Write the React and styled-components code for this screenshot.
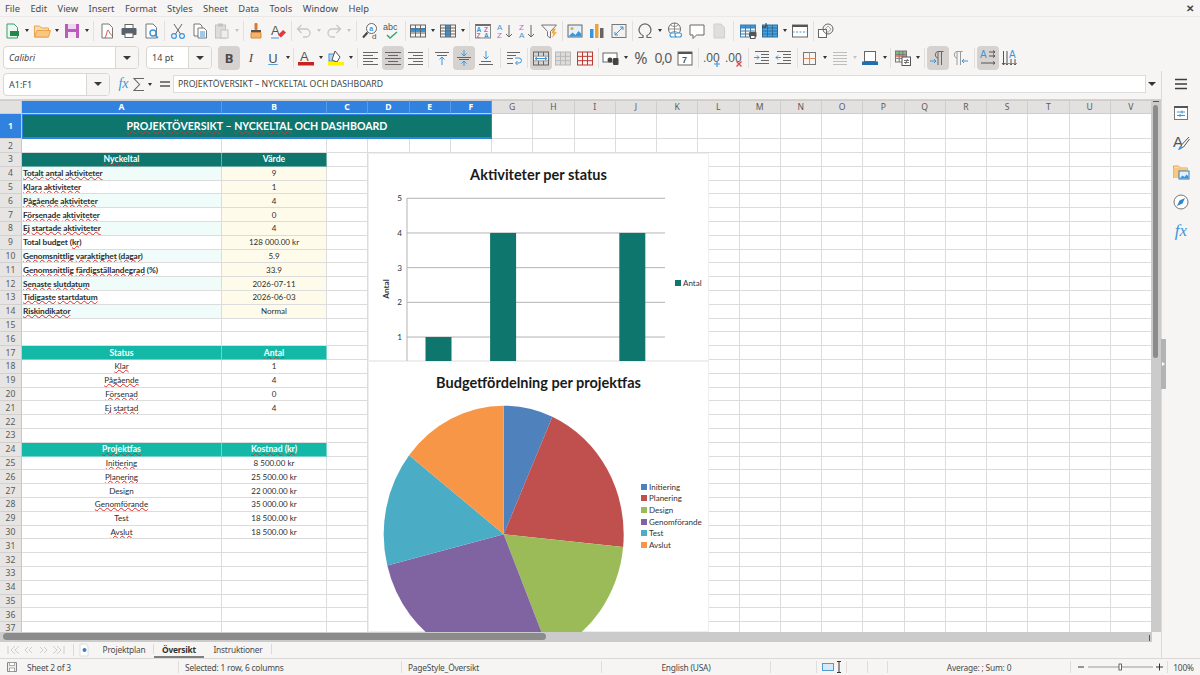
import React from "react";
import styled, { createGlobalStyle } from "styled-components";

// ─── Global ───

const Global = createGlobalStyle`
  html, body { margin: 0; padding: 0; background: #f6f5f4; }
  body { width: 1200px; height: 675px; overflow: hidden; font-family: "Noto Sans", sans-serif; }
  * { box-sizing: border-box; }
  svg { flex: none; }
`;

const UI = `"Noto Sans", "Open Sans", sans-serif`;
const SHEET = `Lato, "Noto Sans", sans-serif`;

// ─── Chrome ───

const Page = styled.div`
  width: 1200px;
  height: 675px;
  display: flex;
  flex-direction: column;
  background: #f6f5f4;
  color: #3d3d3d;
  overflow: hidden;
`;

const MenuBar = styled.div`
  height: 17px;
  display: flex;
  align-items: center;
  justify-content: space-between;
  padding: 0 6px 0 5px;
  font: 9.4px ${UI};
  color: #4a4a4a;
  border-bottom: 1px solid #ebe9e7;
`;

const MenuList = styled.div`
  display: flex;
  gap: 10.4px;
`;

const CloseMark = styled.span`
  font-size: 10px;
  font-weight: 700;
  color: #444;
`;

const Toolbar = styled.div`
  height: 27px;
  display: flex;
  align-items: center;
  padding-left: ${({ $pad }) => $pad}px;
`;

const Btn = styled.div`
  width: 22px;
  height: 24px;
  flex: none;
  display: flex;
  align-items: center;
  justify-content: center;
  border-radius: 4px;
  background: ${({ $on }) => ($on ? "#d5d2cf" : "transparent")};
`;

const Drop = styled.div`
  width: 8px;
  flex: none;
  display: flex;
  justify-content: center;
  &::after {
    content: "";
    border-left: 2.5px solid transparent;
    border-right: 2.5px solid transparent;
    border-top: 3px solid ${({ $off }) => ($off ? "#c4c4c4" : "#333")};
  }
`;

const Sep = styled.div`
  width: ${({ $w }) => $w}px;
  height: 20px;
  flex: none;
  display: flex;
  justify-content: center;
  &::after {
    content: "";
    width: 1px;
    background: #e2e0de;
  }
`;

const Combo = styled.div`
  width: ${({ $w }) => $w}px;
  height: 23px;
  flex: none;
  display: flex;
  align-items: stretch;
  margin-right: ${({ $gap }) => $gap || 0}px;
  background: #fff;
  border: 1px solid #d9d7d4;
  border-radius: 4px;
  overflow: hidden;
`;

const ComboText = styled.div`
  flex: 1;
  display: flex;
  align-items: center;
  padding-left: 5px;
  font: ${({ $italic }) => ($italic ? "italic" : "normal")} 9px ${UI};
  color: #444;
`;

const ComboArrow = styled.div`
  width: 23px;
  flex: none;
  display: flex;
  align-items: center;
  justify-content: center;
  background: #f6f5f4;
  border-left: 1px solid #d9d7d4;
  &::after {
    content: "";
    border-left: 4px solid transparent;
    border-right: 4px solid transparent;
    border-top: 4px solid #3a3a3a;
  }
`;

const Letter = styled.span`
  font: ${({ $bold }) => ($bold ? 700 : 400)} ${({ $italic }) => ($italic ? "italic" : "normal")} ${({ $size }) => $size || 13}px ${({ $italic }) => ($italic ? `"Liberation Serif", serif` : UI)};
  color: ${({ $c }) => $c || "#4a4a4a"};
  letter-spacing: ${({ $track }) => $track || 0}px;
  text-decoration: ${({ $under }) => ($under ? "underline" : "none")};
  text-decoration-color: #5aa0d8;
`;

const Middle = styled.div`
  flex: 1;
  min-height: 0;
  display: flex;
`;

const LeftColumn = styled.div`
  width: 1162px;
  display: flex;
  flex-direction: column;
  border-right: 1px solid #dcdad8;
`;

const FormulaBar = styled.div`
  height: 29px;
  display: flex;
  align-items: center;
  padding-left: 3px;
  border-bottom: 1px solid #d4d2d0;
`;

const NameBox = styled(Combo)`
  margin-top: -2px;
`;

const FormulaIcons = styled.div`
  display: flex;
  align-items: center;
  margin-left: 6px;
  margin-top: -2px;
`;

const FormulaBtn = styled(Btn)`
  width: 15px;
`;

const FormulaDrop = styled(Drop)`
  margin-right: 3px;
`;

const FormulaInput = styled.div`
  width: 973px;
  height: 18px;
  margin: -2px 0 0 1px;
  padding-left: 4px;
  display: flex;
  align-items: center;
  background: #fff;
  border: 1px solid #dedcda;
  font: 8.7px ${UI};
  color: #444;
  white-space: nowrap;
`;

const FormulaArrow = styled(Drop)`
  margin: -2px 0 0 2px;
  &::after {
    border-left-width: 4px;
    border-right-width: 4px;
    border-top-width: 4px;
  }
`;

const Work = styled.div`
  height: 532px;
  display: flex;
`;

// ─── Sheet ───

const Sheet = styled.div`
  position: relative;
  width: 1152px;
  height: 532px;
  overflow: hidden;
  background: #fff;
`;

const Row = styled.div`
  display: grid;
  grid-template-columns: 22px 200px 105px repeat(20, 41.25px);
  height: ${({ $h }) => $h}px;
`;

const ColHead = styled.div`
  display: flex;
  align-items: center;
  justify-content: center;
  font: ${({ $sel }) => ($sel ? 700 : 400)} 8.6px ${UI};
  color: ${({ $sel }) => ($sel ? "#fff" : "#5a5a5a")};
  background: ${({ $sel }) => ($sel ? "#3181de" : "#e2e1df")};
  border-right: 1px solid ${({ $sel }) => ($sel ? "#5a9be6" : "#cfcecc")};
  border-bottom: 1px solid #cfcecc;
  border-top: 1px solid #cfcecc;
`;

const RowHead = styled.div`
  display: flex;
  align-items: center;
  justify-content: center;
  font: ${({ $sel }) => ($sel ? 700 : 400)} 8.6px ${UI};
  color: ${({ $sel }) => ($sel ? "#fff" : "#5a5a5a")};
  background: ${({ $sel }) => ($sel ? "#3181de" : "#e6e5e3")};
  border-right: 1px solid #c8c7c5;
  border-bottom: 1px solid #d2d1cf;
`;

const Cell = styled.div`
  display: flex;
  align-items: center;
  justify-content: ${({ $left }) => ($left ? "flex-start" : "center")};
  padding-left: ${({ $left }) => ($left ? "1px" : 0)};
  min-width: 0;
  overflow: hidden;
  white-space: pre;
  font: ${({ $bold }) => ($bold ? 700 : 400)} ${({ $size }) => $size || 8.1}px ${SHEET};
  letter-spacing: ${({ $left }) => ($left ? "-0.09px" : 0)};
  color: ${({ $fg }) => $fg || "#2c2c2c"};
  background: ${({ $bg }) => $bg || "#fff"};
  border-right: 1px solid ${({ $line }) => $line || "#dcdcdc"};
  border-bottom: 1px solid ${({ $line }) => $line || "#dcdcdc"};
`;

const TitleCell = styled(Cell)`
  grid-column: span 6;
  font-size: 10.6px;
  color: #fff;
  background: #0f766e;
  border: 1px solid #bfe0ec;
  outline: 1px solid #3181de;
  outline-offset: -1px;
  border-bottom: 2px solid #3181de;
`;

const Misspelt = styled.span`
  text-decoration: underline wavy #e02b2b;
  text-decoration-thickness: 1px;
  text-underline-offset: 0;
  text-decoration-skip-ink: none;
`;

const VScroll = styled.div`
  position: relative;
  width: 10px;
  background: #cbcbcb;
  &::before {
    content: "";
    position: absolute;
    left: 2px;
    top: 5px;
    width: 5px;
    height: 253px;
    border-radius: 3px;
    background: #8b8b8b;
  }
  &::after {
    content: "";
    position: absolute;
    left: 2px;
    top: 1px;
    width: 6px;
    height: 1px;
    background: #555;
  }
`;

const HScrollRow = styled.div`
  height: 10px;
  width: 1152px;
  position: relative;
  background: #cbcbcb;
  &::before {
    content: "";
    position: absolute;
    left: 3px;
    top: 1px;
    width: 543px;
    height: 7px;
    border-radius: 4px;
    background: #8b8b8b;
  }
  &::after {
    content: "";
    position: absolute;
    right: 2px;
    top: 3px;
    width: 1px;
    height: 6px;
    background: #555;
  }
`;

// ─── Charts ───

const ChartFrame = styled.div`
  position: absolute;
  left: 368px;
  top: ${({ $top }) => $top}px;
  width: 341px;
  height: ${({ $h }) => $h}px;
  overflow: hidden;
  background: #fff;
  box-shadow: inset 0 0 0 1px #eeeeee;
`;

const ChartTitle = styled.div`
  height: 42px;
  display: flex;
  align-items: center;
  justify-content: center;
  font: 700 14.5px ${SHEET};
  color: #1a1a1a;
`;

const ChartBody = styled.div`
  display: flex;
  align-items: flex-start;
`;

const Plot = styled.svg`
  overflow: visible;
`;

const Legend = styled.div`
  display: flex;
  flex-direction: column;
  margin-left: ${({ $left }) => $left}px;
  margin-top: ${({ $top }) => $top}px;
`;

const LegendItem = styled.div`
  height: 11.65px;
  display: flex;
  align-items: center;
  gap: 2px;
  font: 8px ${SHEET};
  color: #333;
  white-space: nowrap;
`;

const Swatch = styled.i`
  width: 6px;
  height: 6px;
  background: ${({ $c }) => $c};
`;

const ChartText = styled.text`
  font: 8.2px ${SHEET};
  fill: #333;
`;

const AxisTitle = styled(ChartText)`
  font-weight: 700;
`;

// ─── Sidebar ───

const Sidebar = styled.div`
  position: relative;
  width: 38px;
  display: flex;
  flex-direction: column;
  align-items: center;
  gap: 7.4px;
  padding-top: 2px;
`;

const SideBtn = styled.div`
  width: 22px;
  height: 22px;
  display: flex;
  align-items: center;
  justify-content: center;
`;

const SideHandle = styled.div`
  position: absolute;
  left: -1px;
  top: 268px;
  width: 5px;
  height: 50px;
  background: #b3b3b3;
  display: flex;
  align-items: center;
  &::after {
    content: "";
    border-top: 2.5px solid transparent;
    border-bottom: 2.5px solid transparent;
    border-left: 3px solid #fff;
    margin-left: 1px;
  }
`;

// ─── Tabs and status bar ───

const Tabs = styled.div`
  height: 16px;
  display: flex;
  align-items: stretch;
  font: 8.4px ${UI};
  letter-spacing: -0.2px;
  color: #4a4a4a;
`;

const TabNav = styled.div`
  width: 74px;
  padding-left: 6px;
  display: flex;
  align-items: center;
  border-right: 1px solid #dcdad8;
  margin: 2px 0;
`;

const TabAdd = styled.div`
  width: 20px;
  padding-left: 5px;
  display: flex;
  align-items: center;
`;

const Tab = styled.div`
  width: ${({ $w }) => $w}px;
  display: flex;
  align-items: center;
  justify-content: center;
  font-weight: ${({ $on }) => ($on ? 700 : 400)};
  color: ${({ $on }) => ($on ? "#333" : "#4a4a4a")};
  border-bottom: 2px solid ${({ $on }) => ($on ? "#7f7f7f" : "transparent")};
  position: relative;
  &::after {
    content: ${({ $bar }) => ($bar ? '""' : "none")};
    position: absolute;
    right: 0;
    top: 2px;
    bottom: 2px;
    width: 1px;
    background: #dcdad8;
  }
`;

const StatusBar = styled.div`
  height: 17px;
  display: grid;
  grid-template-columns: 179px 223px 200px 169px 46px 30px 21px 20px 183px 97px 1fr;
  font: 8.4px ${UI};
  letter-spacing: -0.2px;
  color: #4a4a4a;
  border-top: 1px solid #dad8d6;
`;

const StatusCell = styled.div`
  display: flex;
  align-items: center;
  justify-content: ${({ $center }) => ($center ? "center" : "flex-start")};
  gap: ${({ $gap }) => $gap || 0}px;
  padding-left: ${({ $pad }) => $pad || 0}px;
  border-right: 1px solid ${({ $last }) => ($last ? "transparent" : "#e0dedc")};
  margin: 2px 0;
  white-space: nowrap;
`;

// ─── Icons ───

const SV = ({ w = 18, h = 18, children }) => (
  <svg width={w} height={h} viewBox={`0 0 ${w} ${h}`} fill="none">
    {children}
  </svg>
);

const Mini = styled.text`
  font: ${({ $w }) => $w || 700} ${({ $s }) => $s || 7}px "Liberation Sans", sans-serif;
  fill: ${({ $c }) => $c || "#555"};
`;

const Doc = ({ fill = "#fff", stroke = "#777" }) => (
  <path d="M4 2h7l3.5 3.5V16H4z" fill={fill} stroke={stroke} />
);

const Grid = ({ x = 1.5, y = 3, w = 15, h = 12, stroke = "#666", rows = 3, cols = 3 }) => (
  <g stroke={stroke} strokeWidth="1">
    <rect x={x} y={y} width={w} height={h} fill="none" />
    {Array.from({ length: rows - 1 }, (_, i) => (
      <path key={i} d={`M${x} ${y + ((i + 1) * h) / rows}h${w}`} />
    ))}
    {Array.from({ length: cols - 1 }, (_, i) => (
      <path key={i} d={`M${x + ((i + 1) * w) / cols} ${y}v${h}`} />
    ))}
  </g>
);

const Lines = ({ rows, stroke = "#666" }) => (
  <g stroke={stroke}>
    {rows.map(([x, y, w], i) => (
      <path key={i} d={`M${x} ${y + 0.5}h${w}`} />
    ))}
  </g>
);

const BLUE = "#3a96dc";

const ICONS = {
  new: <SV><Doc stroke="#35a067" fill="#eef8f2" /><rect x="7" y="9" width="9" height="5" fill="#1e8a4c" /></SV>,
  open: <SV><path d="M1.5 15V4h5l2 2h7v9z" fill="#fbdcae" stroke="#e9a24f" /><path d="M1.5 15L4 8.5h13.5L15.5 15z" fill="#f9c77f" stroke="#e9a24f" /></SV>,
  save: <SV><rect x="2" y="2" width="14" height="14" fill="#bb5cbb" /><rect x="5" y="2" width="8" height="5" fill="#f0d6f0" /><rect x="5" y="10" width="8" height="6" fill="#f6e6f6" /></SV>,
  pdf: <SV><Doc /><path d="M7 16c2-4 2-8 3-8s1 4 5 6" stroke="#e04040" /></SV>,
  print: <SV><rect x="5" y="2.5" width="8" height="4" fill="#fff" stroke="#666" /><rect x="1.5" y="6" width="15" height="7" rx="1" fill="#58616b" /><rect x="5" y="11" width="8" height="4.5" fill="#fff" stroke="#666" /></SV>,
  preview: <SV><Doc /><circle cx="11" cy="11" r="3" fill="#fff" stroke={BLUE} strokeWidth="1.4" /><path d="M13 13l3 3" stroke={BLUE} strokeWidth="1.6" /></SV>,
  cut: <SV><path d="M5 2l6.5 10M13 2L6.5 12" stroke="#666" /><circle cx="5" cy="14" r="2.4" stroke={BLUE} strokeWidth="1.2" /><circle cx="13" cy="14" r="2.4" stroke={BLUE} strokeWidth="1.2" /></SV>,
  copy: <SV><path d="M3 2h6l2 2v10H3z" fill="#fff" stroke="#777" /><path d="M7 6h6l2.5 2.5V16H7z" fill="#fff" stroke="#777" /><path d="M9 10h5M9 12h5M9 14h5" stroke={BLUE} /></SV>,
  paste: <SV><rect x="2.5" y="3" width="10" height="13" fill="#dcdcdc" stroke="#c2c2c2" /><rect x="5" y="1.5" width="5" height="3" fill="#c2c2c2" /><rect x="8" y="8" width="7" height="8" fill="#eee" stroke="#c2c2c2" /></SV>,
  clone: <SV><rect x="7.5" y="1" width="3" height="7" rx="1" fill="#d9772b" /><rect x="4" y="8" width="10" height="2.5" fill="#555" /><path d="M4 10.5h10V16H4z" fill="#f3b36f" stroke="#d98a3e" /></SV>,
  clear: <SV><Mini x="2" y="13" $s="13" $w="400">A</Mini><path d="M9 13l5-5 3 2.5-5 5z" fill="#e2393c" /><path d="M2 16h8" stroke={BLUE} /></SV>,
  undo: <SV><path d="M6.5 3L2.5 7l4 4M2.5 7H11a4 4 0 0 1 0 8H8" stroke="#c6c6c6" strokeWidth="1.3" /></SV>,
  redo: <SV><path d="M11.5 3l4 4-4 4M15.5 7H7a4 4 0 0 0 0 8h3" stroke="#c6c6c6" strokeWidth="1.3" /></SV>,
  find: <SV><circle cx="10.5" cy="6.5" r="5" fill="#fff" stroke="#666" /><path d="M6.5 10.5L2 15.5" stroke="#444" strokeWidth="2" /><Mini x="8.3" y="9" $s="7" $c={BLUE}>a</Mini><Mini x="11" y="17" $s="8" $w="400">d</Mini></SV>,
  spell: <SV><Mini x="0" y="8" $s="9" $w="400">abc</Mini><path d="M4 13l3 3 7-6" stroke="#34a468" strokeWidth="1.4" /></SV>,
  row: <SV><rect x="1.5" y="6" width="15" height="4" fill={BLUE} /><Grid /></SV>,
  column: <SV><rect x="6.5" y="3" width="5" height="12" fill={BLUE} /><Grid rows={4} /></SV>,
  sort: <SV><rect x="1" y="2" width="16" height="2" fill="#555" /><rect x="1.5" y="3" width="15" height="13" stroke="#888" /><Mini x="2.5" y="9.5" $s="6.5" $c={BLUE}>A</Mini><Mini x="2.5" y="15.5" $s="6.5" $c="#c763c7">Z</Mini><Mini x="10" y="9.5" $s="6.5" $c="#c763c7">Z</Mini><Mini x="10" y="15.5" $s="6.5" $c={BLUE}>A</Mini></SV>,
  asc: <SV><Mini x="1" y="8" $s="8" $w="400" $c={BLUE}>A</Mini><Mini x="1" y="16" $s="8" $w="400" $c="#c763c7">Z</Mini><path d="M13 3v12M10 12l3 3 3-3" stroke="#666" /></SV>,
  desc: <SV><Mini x="1" y="8" $s="8" $w="400" $c="#c763c7">Z</Mini><Mini x="1" y="16" $s="8" $w="400" $c={BLUE}>A</Mini><path d="M13 3v12M10 12l3 3 3-3" stroke="#666" /></SV>,
  filter: <SV><path d="M1.5 3h15l-6 6.5V16l-3-2V9.5z" stroke="#777" /><path d="M13 7l3-.5-2 4 3-.5-5 6 1.5-5-2 .5z" fill="#f0a533" /></SV>,
  image: <SV><rect x="2" y="3" width="14" height="12" fill="#e4f1fb" stroke="#666" /><circle cx="6" cy="6.5" r="1.5" fill="#f2a53c" /><path d="M2.5 14.5l4-4 3 2.5 3-4 3 3v2.5z" fill={BLUE} /></SV>,
  chart: <SV><rect x="2" y="7" width="3.5" height="9" fill={BLUE} /><rect x="7" y="2" width="3.5" height="14" fill="#eda33d" /><rect x="12" y="6" width="3.5" height="10" fill="#666" /></SV>,
  pivot: <SV><rect x="2" y="2.5" width="14" height="13" fill="#f1f1f1" stroke="#777" /><path d="M5 13l8-8M10 5h3v3M5 10v3h3" stroke={BLUE} /></SV>,
  omega: <SV><path d="M2.5 15.5H7v-2a6 6 0 1 1 4 0v2h4.5" stroke="#666" strokeWidth="1.2" /></SV>,
  link: <SV><circle cx="8.5" cy="7" r="6" fill="#fff" stroke="#666" /><path d="M2.5 7h12M8.500 1v12M4.500 3c3 2 5 2 8 0M4.500 11c3-2 5-2 8 0" stroke="#777" strokeWidth=".8" /><rect x="4" y="11" width="6.5" height="4" rx="2" fill="#fff" stroke={BLUE} strokeWidth="1.1" /><rect x="9" y="11" width="6.5" height="4" rx="2" fill="#fff" stroke={BLUE} strokeWidth="1.1" /></SV>,
  comment: <SV><path d="M2 3h14v10H8.5L5 16.5V13H2z" fill="#fff" stroke="#666" /></SV>,
  header: <SV><Doc fill="#dedede" stroke="#cfcfcf" /></SV>,
  definePrint: <SV><rect x="1.5" y="3" width="15" height="3" fill={BLUE} /><Grid stroke="#3f7fae" rows={4} /><rect x="10" y="10" width="7.5" height="5" rx="1" fill="#555" /><rect x="11.5" y="13.5" width="4.5" height="3" fill="#fff" stroke="#555" /></SV>,
  freeze: <SV><rect x="1.5" y="3" width="15" height="12" fill="#4aa3de" /><Grid stroke="#2b6f9f" rows={4} /><path d="M5 1v4M1 5h4" stroke="#333" /></SV>,
  split: <SV><rect x="1.5" y="3" width="15" height="12" fill="#fff" stroke="#666" /><rect x="1.5" y="3" width="15" height="2" fill="#555" /><path d="M1.5 10h15" stroke={BLUE} strokeDasharray="2 1.5" /></SV>,
  shapes: <SV><rect x="1.5" y="7.5" width="8" height="8" fill="#fff" stroke="#666" /><circle cx="11" cy="7" r="5" stroke="#666" /><path d="M11 4l3 3-3 3.5L8 7z" stroke="#888" strokeWidth=".7" /></SV>,

  fontColor: <SV><Mini x="3" y="12" $s="13" $w="400">A</Mini><rect x="1" y="13" width="16" height="3.5" fill="#c9211e" /></SV>,
  highlight: <SV><rect x="2" y="5" width="8" height="7" fill="#bcd6ee" stroke={BLUE} /><path d="M8 2l5 6-3 5-5-2z" fill="#fff" stroke="#555" /><rect x="1" y="13" width="16" height="3.5" fill="#fff200" /></SV>,
  alignLeft: <SV><Lines rows={[[1, 3, 15], [1, 6, 10], [1, 9, 15], [1, 12, 10], [1, 15, 15]]} /></SV>,
  alignCenter: <SV><Lines rows={[[1, 3, 16], [4, 6, 10], [1, 9, 16], [4, 12, 10], [1, 15, 16]]} /></SV>,
  alignRight: <SV><Lines rows={[[2, 3, 15], [7, 6, 10], [2, 9, 15], [7, 12, 10], [2, 15, 15]]} /></SV>,
  vTop: <SV><Lines rows={[[2, 3, 14], [4, 6, 10]]} /><path d="M9 16V8M6.5 10.5L9 8l2.5 2.5" stroke={BLUE} /></SV>,
  vMid: <SV><Lines rows={[[2, 8, 14], [4, 10, 10]]} /><path d="M9 1v6M6.5 4.5L9 7l2.5-2.5M9 17v-5M6.5 14.5L9 12l2.5 2.5" stroke={BLUE} /></SV>,
  vBottom: <SV><Lines rows={[[4, 12, 10], [2, 15, 14]]} /><path d="M9 2v8M6.5 7.5L9 10l2.5-2.5" stroke={BLUE} /></SV>,
  wrap: <SV><Lines rows={[[2, 3, 13], [2, 6, 9], [2, 9, 6], [2, 14, 6]]} /><path d="M10 9h4a2.5 2.5 0 0 1 0 5h-3M12.5 12l-2 2 2 2" stroke={BLUE} /></SV>,
  merge: <SV><Grid y={3} h={13} stroke="#666" rows={3} cols={3} /><rect x="2" y="7.5" width="14" height="4" fill="#fff" /><path d="M3 9.5h12M5 8L3 9.5 5 11M13 8l2 1.5-2 1.500" stroke={BLUE} /></SV>,
  unmerge: <SV><rect x="1.5" y="3" width="15" height="13" fill="#ddd" /><Grid y={3} h={13} stroke="#b8b8b8" /></SV>,
  splitCell: <SV><Grid y={3} h={13} stroke="#c0392f" /></SV>,
  currency: <SV><rect x="1" y="4" width="14" height="9" fill="#fff" stroke="#666" /><circle cx="8" cy="11" r="2.5" fill="#444" /><rect x="11" y="9" width="5.5" height="7" rx="1" fill="#444" /></SV>,
  percent: <Letter $size={16} $c="#5c5c5c">%</Letter>,
  number: <Letter $size={14} $c="#5c5c5c" $track={-1}>0,0</Letter>,
  date: <SV><rect x="2" y="3" width="14" height="13" fill="#fff" stroke="#666" /><rect x="2" y="3" width="14" height="2" fill="#555" /><Mini x="6" y="14" $s="9">7</Mini></SV>,
  addDec: <SV><Mini x="0" y="13" $s="12" $w="400">.00</Mini><path d="M14 12v6M11 15h6" stroke={BLUE} strokeWidth="1.2" /></SV>,
  remDec: <SV><Mini x="0" y="13" $s="12" $w="400">.00</Mini><path d="M11.5 12.5l5 5M16.5 12.5l-5 5" stroke="#e0403c" strokeWidth="1.2" /></SV>,
  indent: <SV><Lines rows={[[2, 2, 14], [8, 5, 8], [8, 8, 8], [8, 11, 8], [2, 14, 14]]} /><path d="M1 8.5h5M4 6.5l2 2-2 2" stroke={BLUE} /></SV>,
  outdent: <SV><Lines rows={[[2, 2, 14], [8, 5, 8], [8, 8, 8], [8, 11, 8], [2, 14, 14]]} /><path d="M6 8.5H1M3 6.500l-2 2 2 2" stroke={BLUE} /></SV>,
  borders: <SV><rect x="2.5" y="3.5" width="12" height="12" stroke="#777" /><path d="M8.5 3.5v12M2.5 9.5h12" stroke="#e08b5a" /></SV>,
  borderStyle: <SV><Lines stroke="#bdbdbd" rows={[[2, 3, 14], [2, 6, 14], [2, 9, 14], [2, 12, 14], [2, 15, 14]]} /></SV>,
  borderColor: <SV><rect x="3.5" y="2.5" width="11" height="10" fill="#fff" stroke="#666" /><rect x="1" y="12.5" width="16" height="3.5" fill="#1f6fb0" /></SV>,
  cond: <SV><rect x="1.5" y="2" width="11" height="3" fill="#7bc27b" /><rect x="1.5" y="5" width="11" height="3" fill="#e38c7f" /><Grid x={1.5} y={2} w={11} h={11} stroke="#777" /><rect x="8" y="8" width="8.5" height="8.5" fill="#fff" stroke="#555" /><path d="M10 11.5h5M10 13.5h5M13.5 10l-2 5" stroke="#555" strokeWidth=".8" /></SV>,
  ltr: <SV><path d="M9 16V2.5M12.5 16V2.5M14.5 2.5h-6a3.5 3.5 0 0 0 0 6.500H9" stroke="#666" /><path d="M1 12h6M5 10l2 2-2 2" stroke={BLUE} /></SV>,
  rtl: <SV><path d="M6 16V2.5M9.5 16V2.5M11.5 2.5h-6a3.5 3.5 0 0 0 0 6.500H6" stroke="#9a9a9a" /><path d="M17 12h-6M13 10l-2 2 2 2" stroke={BLUE} /></SV>,
  horiz: <SV><Mini x="1" y="9" $s="10" $w="400" $c={BLUE}>A</Mini><path d="M10 3h6M14 1.5L16 3l-2 1.5M10 7h6M14 5.5L16 7l-2 1.5M2 14h14M14 12.5l2 1.5-2 1.5" stroke="#555" /></SV>,
  vert: <SV><Mini x="8" y="9" $s="10" $w="400" $c={BLUE}>A</Mini><path d="M2.5 2v14M1 14l1.5 2L4 14M6 2v14M4.5 14L6 16l1.5-2M10 10v6M8.5 14l1.5 2 1.5-2M14 10v6M12.5 14l1.5 2 1.5-2" stroke="#555" /></SV>,

  fx: <Letter $italic $c={BLUE} $size={14}>fx</Letter>,
  sigma: <SV><path d="M14 3.500H4l5.500 6L4 15.500h10" stroke="#666" strokeWidth="1.100" /></SV>,
  equal: <SV w={12}><path d="M1 7h10M1 11h10" stroke="#555" strokeWidth="1.5" /></SV>,

  hamburger: <SV><path d="M3 4.5h12M3 9h12M3 13.5h12" stroke="#3c3c3c" strokeWidth="1.5" /></SV>,
  props: <SV><rect x="2.5" y="2.5" width="13" height="13" fill="#fff" stroke="#777" /><rect x="2" y="2" width="14" height="2" fill="#555" /><path d="M5 8h8M5 11.5h8M10 6.5v3M8 10v3" stroke={BLUE} /></SV>,
  styles: <SV><Mini x="1" y="13" $s="15" $w="400">A</Mini><path d="M17 3L9.5 11l-1 3 3-1L17.5 5" fill="#fff" stroke="#555" /><path d="M6 16c2 0 4-1 4-3l-1.5-1C6.5 13 7 15 6 16z" fill={BLUE} /></SV>,
  gallery: <SV><path d="M1.5 15V3h5l2 2h7v2" fill="#fbdcae" stroke="#e9a24f" /><rect x="1.5" y="5" width="14" height="10" fill="#f9c77f" /><rect x="7" y="8" width="10" height="8" fill="#e4f1fb" stroke="#3a7eb5" /><path d="M7.5 15.5l3-3 2 1.5 2-2.5 2 2v2z" fill={BLUE} /></SV>,
  navigator: <SV><circle cx="9" cy="9" r="7" fill="#fff" stroke="#777" /><path d="M13 5l-2.500 5.500L5 13l2.500-5.500z" fill="#2f86c9" /></SV>,
  fxSide: <Letter $italic $c={BLUE} $size={17}>fx</Letter>,
};

const BAR_ONE = [
  "new", "-", "open", "-", "save", "-", 5, "pdf", "print", "preview", 5, "cut", "copy", "paste", "~", 4,
  "clone", "clear", 4, "undo", "~", "redo", "~", 6, "find", "spell", 4, "row", "-", "column", "-", 5,
  "sort", "asc", "desc", "filter", 4, "image", "chart", "pivot", 4, "omega", "-", "link", "comment", "header", 7,
  "definePrint", "freeze", "-", "split", 4, "shapes",
];

const BAR_TWO = [
  "!bold", "italic", "under", "-", 3, "fontColor", "-", "highlight", "-", 5, "alignLeft", "*alignCenter", "alignRight", 5,
  "vTop", "*vMid", "vBottom", 6, "wrap", 5, "*merge", "unmerge", "splitCell", 4, "currency", "-", "percent", "number", "date", 5,
  "addDec", "remDec", 6, "indent", "outdent", 4, "borders", "-", "borderStyle", "~", "borderColor", "-", 3, "cond", "-", 5,
  "*ltr", "rtl", 6, "*horiz", "vert",
];

const TEXT_BTN = {
  bold: <Letter $bold>B</Letter>,
  italic: <Letter $italic>I</Letter>,
  under: <Letter $under>U</Letter>,
};

const BarItems = ({ items }) =>
  items.map((item, i) => {
    if (item === "-") return <Drop key={i} />;
    if (item === "~") return <Drop key={i} $off />;
    if (typeof item === "number") return <Sep key={i} $w={item} />;
    if (item === "!bold") return <Btn key={i} $on>{TEXT_BTN.bold}</Btn>;
    if (item[0] === "*") return <Btn key={i} $on>{ICONS[item.slice(1)]}</Btn>;
    return <Btn key={i}>{TEXT_BTN[item] || ICONS[item]}</Btn>;
  });

// ─── Sheet data ───

const MENUS = ["File", "Edit", "View", "Insert", "Format", "Styles", "Sheet", "Data", "Tools", "Window", "Help"];
const COLS = "ABCDEFGHIJKLMNOPQRSTUV".split("");

const DARK = "#0f766e";
const BRIGHT = "#14b8a6";
const MINT = "#effcf9";
const CREAM = "#fffbeb";

// ~ marks a word the spell checker flagged
const CELLS = {
  3: { head: DARK, a: "~Nyckeltal", b: "Värde" },
  4: { a: "~Totalt ~antal ~aktiviteter", b: "9", kpi: true },
  5: { a: "~Klara ~aktiviteter", b: "1", kpi: true },
  6: { a: "~Pågående ~aktiviteter", b: "4", kpi: true },
  7: { a: "~Försenade ~aktiviteter", b: "0", kpi: true },
  8: { a: "~Ej ~startade ~aktiviteter", b: "4", kpi: true },
  9: { a: "Total budget (~kr)", b: "128 000.00 kr", kpi: true },
  10: { a: "~Genomsnittlig ~varaktighet (~dagar)", b: "5.9", kpi: true },
  11: { a: "~Genomsnittlig ~färdigställandegrad (%)", b: "33.9", kpi: true },
  12: { a: "~Senaste ~slutdatum", b: "2026-07-11", kpi: true },
  13: { a: "~Tidigaste ~startdatum", b: "2026-06-03", kpi: true },
  14: { a: "~Riskindikator", b: "Normal", kpi: true },
  17: { head: BRIGHT, a: "Status", b: "~Antal" },
  18: { a: "~Klar", b: "1" },
  19: { a: "~Pågående", b: "4" },
  20: { a: "~Försenad", b: "0" },
  21: { a: "~Ej ~startad", b: "4" },
  24: { head: BRIGHT, a: "~Projektfas", b: "~Kostnad (~kr)" },
  25: { a: "~Initiering", b: "8 500.00 kr" },
  26: { a: "~Planering", b: "25 500.00 kr" },
  27: { a: "Design", b: "22 000.00 kr" },
  28: { a: "~Genomförande", b: "35 000.00 kr" },
  29: { a: "Test", b: "18 500.00 kr" },
  30: { a: "~Avslut", b: "18 500.00 kr" },
};

const Spell = ({ text }) =>
  text.split(" ").map((word, i, all) => {
    const tail = i < all.length - 1 ? " " : "";
    const paren = word.match(/^\(~(.+)\)$/);
    if (paren) return <span key={i}>(<Misspelt>{paren[1]}</Misspelt>){tail}</span>;
    if (word[0] === "~") return <span key={i}><Misspelt>{word.slice(1)}</Misspelt>{tail}</span>;
    return <span key={i}>{word}{tail}</span>;
  });

const SheetRow = ({ n }) => {
  const data = CELLS[n];
  const heights = { 2: 14 };
  const rest = COLS.slice(data ? 2 : 0);
  return (
    <Row $h={heights[n] || 13.8}>
      <RowHead>{n}</RowHead>
      {data && (
        <>
          <Cell
            $left={data.kpi}
            $bold={data.kpi || data.head}
            $size={data.kpi ? 8.3 : data.head ? 8.6 : 8.1}
            $fg={data.head ? "#fff" : undefined}
            $bg={data.head || (data.kpi && n % 2 === 0 ? MINT : undefined)}
            $line={data.head ? "#ffffff66" : undefined}
          >
            <Spell text={data.a} />
          </Cell>
          <Cell
            $bold={data.head}
            $size={data.head ? 8.6 : 8}
            $fg={data.head ? "#fff" : undefined}
            $bg={data.head || (data.kpi ? CREAM : undefined)}
            $line={data.head ? "#ffffff66" : undefined}
          >
            <Spell text={data.b} />
          </Cell>
        </>
      )}
      {rest.map((c) => (
        <Cell key={c} />
      ))}
    </Row>
  );
};

const BAR_VALUES = [1, 4, 0, 4];
const TICKS = [5, 4, 3, 2, 1];
const PIE = [
  ["Initiering", 8.5, "#4f81bd"],
  ["Planering", 25.5, "#c0504d"],
  ["Design", 22, "#9bbb59"],
  ["Genomförande", 35, "#8064a2"],
  ["Test", 18.5, "#4bacc6"],
  ["Avslut", 18.5, "#f79646"],
];

const pieSlices = (cx, cy, rx, ry) => {
  const total = PIE.reduce((sum, p) => sum + p[1], 0);
  let angle = 0;
  return PIE.map(([name, value, color]) => {
    const start = angle;
    angle += (value / total) * Math.PI * 2;
    const x0 = cx + rx * Math.sin(start);
    const y0 = cy - ry * Math.cos(start);
    const x1 = cx + rx * Math.sin(angle);
    const y1 = cy - ry * Math.cos(angle);
    const large = angle - start > Math.PI ? 1 : 0;
    return <path key={name} fill={color} d={`M${cx} ${cy}L${x0} ${y0}A${rx} ${ry} 0 ${large} 1 ${x1} ${y1}Z`} />;
  });
};

const App = () => (
  <Page>
    <Global />
    <MenuBar>
      <MenuList>
        {MENUS.map((m) => (
          <span key={m}>{m}</span>
        ))}
      </MenuList>
      <CloseMark>✕</CloseMark>
    </MenuBar>

    <Toolbar $pad={1}>
      <BarItems items={BAR_ONE} />
    </Toolbar>

    <Toolbar $pad={3}>
      <Combo $w={136} $gap={7}>
        <ComboText $italic>Calibri</ComboText>
        <ComboArrow />
      </Combo>
      <Combo $w={66} $gap={6}>
        <ComboText>14 pt</ComboText>
        <ComboArrow />
      </Combo>
      <BarItems items={BAR_TWO} />
    </Toolbar>

    <Middle>
      <LeftColumn>
        <FormulaBar>
          <NameBox $w={107}>
            <ComboText>A1:F1</ComboText>
            <ComboArrow />
          </NameBox>
          <FormulaIcons>
            <FormulaBtn>{ICONS.fx}</FormulaBtn>
            <FormulaBtn>{ICONS.sigma}</FormulaBtn>
            <FormulaDrop />
            <FormulaBtn>{ICONS.equal}</FormulaBtn>
          </FormulaIcons>
          <FormulaInput>PROJEKTÖVERSIKT – NYCKELTAL OCH DASHBOARD</FormulaInput>
          <FormulaArrow />
        </FormulaBar>

        <Work>
          <Sheet>
            <Row $h={14}>
              <ColHead />
              {COLS.map((c, i) => (
                <ColHead key={c} $sel={i < 6}>{c}</ColHead>
              ))}
            </Row>
            <Row $h={25}>
              <RowHead $sel>1</RowHead>
              <TitleCell $bold>
                <Spell text="~PROJEKTÖVERSIKT – ~NYCKELTAL OCH DASHBOARD" />
              </TitleCell>
              {COLS.slice(6).map((c) => (
                <Cell key={c} />
              ))}
            </Row>
            {Array.from({ length: 36 }, (_, i) => (
              <SheetRow key={i} n={i + 2} />
            ))}

            <ChartFrame $top={53} $h={208}>
              <ChartTitle>Aktiviteter per status</ChartTitle>
              <ChartBody>
                <Plot width="300" height="166">
                  {TICKS.map((t) => {
                    const y = 176.7 - t * 34.68;
                    return (
                      <g key={t}>
                        <path d={`M39 ${y}H297`} stroke="#b3b3b3" />
                        <ChartText x="34" y={y + 3} textAnchor="end">{t}</ChartText>
                      </g>
                    );
                  })}
                  <path d="M39 3V170" stroke="#b3b3b3" />
                  {BAR_VALUES.map((v, i) => (
                    <rect key={i} x={57.5 + i * 64.6} y={176.7 - v * 34.68} width="26" height={v * 34.68} fill="#0f766e" />
                  ))}
                  <AxisTitle transform="rotate(-90 21 94)" x="21" y="94" textAnchor="middle">Antal</AxisTitle>
                </Plot>
                <Legend $left={7} $top={82}>
                  <LegendItem><Swatch $c="#0f766e" />Antal</LegendItem>
                </Legend>
              </ChartBody>
            </ChartFrame>

            <ChartFrame $top={261} $h={271}>
              <ChartTitle>Budgetfördelning per projektfas</ChartTitle>
              <ChartBody>
                <svg width="270" height="229">{pieSlices(135.7, 131.3, 120, 128.6)}</svg>
                <Legend $left={3} $top={78}>
                  {PIE.map(([name, , color]) => (
                    <LegendItem key={name}><Swatch $c={color} />{name}</LegendItem>
                  ))}
                </Legend>
              </ChartBody>
            </ChartFrame>
          </Sheet>
          <VScroll />
        </Work>
        <HScrollRow />

        <Tabs>
          <TabNav>
            <SV w={60} h={12}>
              <path d="M2 2v8M9 2L5 6l4 4M13 2L9 6l4 4M22 3l-3 3 3 3M26 3l-3 3 3 3M34 3l3 3-3 3M38 3l3 3-3 3M47 2l4 4-4 4M51 2l4 4-4 4M58 2v8" stroke="#d0cfcd" />
            </SV>
          </TabNav>
          <TabAdd>
            <SV w={10} h={14}>
              <path d="M1 1h6l2 2v10H1z" fill="#fff" stroke="#dcdcdc" />
              <circle cx="5.5" cy="7" r="2" fill="#3a7fc4" />
            </SV>
          </TabAdd>
          <Tab $w={60} $bar>Projektplan</Tab>
          <Tab $w={50} $on>Översikt</Tab>
          <Tab $w={68} $bar>Instruktioner</Tab>
        </Tabs>
      </LeftColumn>

      <Sidebar>
        <SideHandle />
        <SideBtn>{ICONS.hamburger}</SideBtn>
        <SideBtn>{ICONS.props}</SideBtn>
        <SideBtn>{ICONS.styles}</SideBtn>
        <SideBtn>{ICONS.gallery}</SideBtn>
        <SideBtn>{ICONS.navigator}</SideBtn>
        <SideBtn>{ICONS.fxSide}</SideBtn>
      </Sidebar>
    </Middle>

    <StatusBar>
      <StatusCell $pad={6} $gap={9}>
        <SV w={12} h={12}>
          <path d="M1.5 1.5h9v9h-9z" fill="#eee" stroke="#888" />
          <path d="M3.5 1.5h5v3h-5zM3.5 7h5v3.5h-5z" fill="#fff" stroke="#888" strokeWidth=".7" />
        </SV>
        Sheet 2 of 3
      </StatusCell>
      <StatusCell $pad={6}>Selected: 1 row, 6 columns</StatusCell>
      <StatusCell $pad={6}>PageStyle_Översikt</StatusCell>
      <StatusCell $center>English (USA)</StatusCell>
      <StatusCell />
      <StatusCell $center $gap={2}>
        <SV w={12} h={8}>
          <rect x=".5" y=".5" width="11" height="7" fill="#d8eaf7" stroke="#4f9bd0" />
        </SV>
        <SV w={6} h={12}>
          <path d="M1 .5h4M3 .5v11M1 11.5h4" stroke="#333" />
        </SV>
      </StatusCell>
      <StatusCell />
      <StatusCell />
      <StatusCell $center>Average: ; Sum: 0</StatusCell>
      <StatusCell $pad={6}>
        <SV w={90} h={12}>
          <path d="M1 6h6M79 6h7M82.5 2.5v7" stroke="#333" />
          <path d="M11 6h65" stroke="#999" />
          <rect x="42" y="3" width="2.5" height="6" fill="#fff" stroke="#444" strokeWidth=".8" />
        </SV>
      </StatusCell>
      <StatusCell $center $last>100%</StatusCell>
    </StatusBar>
  </Page>
);

export default App;
